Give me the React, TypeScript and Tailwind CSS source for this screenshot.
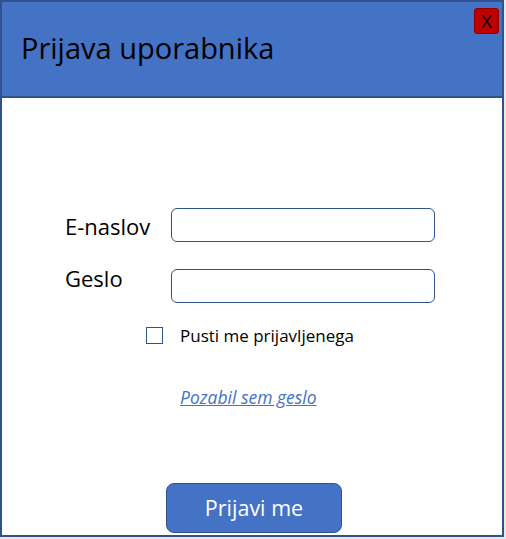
import React from "react";

export default function App() {
  const font = { fontFamily: '"Open Sans", "Noto Sans", sans-serif' };
  return (
    <div className="w-[506px] h-[539px] bg-[#e6e9ef]" style={font}>
      <div className="relative w-[504px] h-[537px] border-2 border-[#2f528f] bg-white flex flex-col">
        <div className="h-[96px] bg-[#4472c4] border-b-2 border-[#2f528f] flex items-center pl-[19px] pb-[3px]">
          <h1 className="text-[29px] leading-none text-black">Prijava uporabnika</h1>
        </div>
        <button className="absolute top-[6px] right-[3px] w-[25px] h-[26px] bg-[#c00000] border border-[#8f0000] rounded-[3px] text-black text-[19px] leading-none flex items-center justify-center">
          X
        </button>
        <div className="flex flex-col pt-[110px]">
          <div className="flex items-center h-[34px]">
            <label className="w-[169px] pl-[63px] text-[22px] leading-none text-black pt-[2px]">E-naslov</label>
            <input className="w-[264px] h-[34px] border-[1.5px] border-[#2f528f] rounded-[6px] outline-none px-2" />
          </div>
          <div className="flex items-center h-[34px] mt-[27px]">
            <label className="w-[169px] pl-[63px] text-[22px] leading-none text-black pb-[16px]">Geslo</label>
            <input type="password" className="w-[264px] h-[34px] border-[1.5px] border-[#2f528f] rounded-[6px] outline-none px-2" />
          </div>
          <div className="flex items-center h-[17px] mt-[24px] pl-[144px]">
            <span className="w-[17px] h-[17px] border-[1.5px] border-[#2f528f] bg-white" />
            <span className="ml-[17px] text-[17px] leading-none text-black">Pusti me prijavljenega</span>
          </div>
          <div className="mt-[44px] h-[20px] pl-[178px] flex items-center">
            <a href="#" className="text-[17.5px] leading-none italic underline text-[#4472c4]">Pozabil sem geslo</a>
          </div>
          <div className="mt-[75px] pl-[164px]">
            <button className="w-[176px] h-[50px] bg-[#4472c4] border-[1.5px] border-[#2f528f] rounded-[8px] text-white text-[21.5px] leading-none">
              Prijavi me
            </button>
          </div>
        </div>
      </div>
    </div>
  );
}
